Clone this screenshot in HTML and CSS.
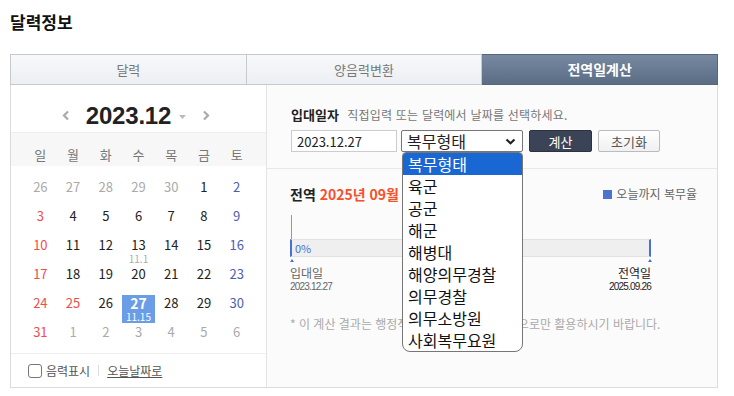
FILE: index.html
```html
<!DOCTYPE html>
<html lang="ko">
<head>
    <meta charset="UTF-8">
    <meta name="viewport" content="width=device-width, initial-scale=1.0">
    <title>달력정보</title>
    <link rel="stylesheet" href="styles.css">
</head>
<body>

<div class="container">
    <h2 class="page-title">달력정보</h2>

    <div class="tabs">
        <div class="tab">달력</div>
        <div class="tab">양음력변환</div>
        <div class="tab active">전역일계산</div>
    </div>

    <div class="panel">
        <!-- calendar -->
        <div class="cal">
            <div class="cal-head">
                <svg class="arrow" width="8" height="11" viewBox="0 0 8 11"><polyline points="6,1.5 2,5.5 6,9.5" fill="none" stroke="#aaa" stroke-width="2.2"/></svg>
                <span class="month">2023.12</span>
                <svg class="caret" width="7" height="4" viewBox="0 0 7 4"><polygon points="0,0 7,0 3.5,4" fill="#bbb"/></svg>
                <svg class="arrow" width="8" height="11" viewBox="0 0 8 11"><polyline points="2,1.5 6,5.5 2,9.5" fill="none" stroke="#aaa" stroke-width="2.2"/></svg>
            </div>
            <div class="week">
                <span>일</span><span>월</span><span>화</span><span>수</span><span>목</span><span>금</span><span>토</span>
            </div>
            <div class="days">
                <div class="day other">26</div>
                <div class="day other">27</div>
                <div class="day other">28</div>
                <div class="day other">29</div>
                <div class="day other">30</div>
                <div class="day">1</div>
                <div class="day sat">2</div>

                <div class="day sun">3</div>
                <div class="day">4</div>
                <div class="day">5</div>
                <div class="day">6</div>
                <div class="day">7</div>
                <div class="day">8</div>
                <div class="day sat">9</div>

                <div class="day sun">10</div>
                <div class="day">11</div>
                <div class="day">12</div>
                <div class="day">13<small>11.1</small></div>
                <div class="day">14</div>
                <div class="day">15</div>
                <div class="day sat">16</div>

                <div class="day sun">17</div>
                <div class="day">18</div>
                <div class="day">19</div>
                <div class="day">20</div>
                <div class="day">21</div>
                <div class="day">22</div>
                <div class="day sat">23</div>

                <div class="day sun">24</div>
                <div class="day sun">25</div>
                <div class="day">26</div>
                <div class="day selected">27<small>11.15</small></div>
                <div class="day">28</div>
                <div class="day">29</div>
                <div class="day sat">30</div>

                <div class="day sun">31</div>
                <div class="day other">1</div>
                <div class="day other">2</div>
                <div class="day other">3</div>
                <div class="day other">4</div>
                <div class="day other">5</div>
                <div class="day other">6</div>
            </div>
            <div class="cal-foot">
                <span class="check"></span>
                <span>음력표시</span>
                <span class="bar-sep"></span>
                <a href="#" class="today">오늘날짜로</a>
            </div>
        </div>

        <!-- discharge calculator -->
        <div class="calc">
            <div class="calc-form">
                <div class="label-row">
                    <strong>입대일자</strong>
                    <span class="hint">직접입력 또는 달력에서 날짜를 선택하세요.</span>
                </div>
                <div class="controls">
                    <input type="text" class="date-input" value="2023.12.27">
                    <div class="sel">
                        <span class="sel-text">복무형태</span>
                        <svg class="chev" width="11" height="7" viewBox="0 0 11 7"><polyline points="1.5,1.5 5.5,5.2 9.5,1.5" fill="none" stroke="#222" stroke-width="2.2"/></svg>
                        <ul class="options">
                            <li class="on">복무형태</li>
                            <li>육군</li>
                            <li>공군</li>
                            <li>해군</li>
                            <li>해병대</li>
                            <li>해양의무경찰</li>
                            <li>의무경찰</li>
                            <li>의무소방원</li>
                            <li>사회복무요원</li>
                        </ul>
                    </div>
                    <button class="btn-calc">계산</button>
                    <button class="btn-reset">초기화</button>
                </div>
            </div>

            <div class="result">
                <div class="result-head">
                    <div class="result-title">전역 <span class="red">2025년 09월 26일</span></div>
                    <div class="legend"><span class="legend-box"></span>오늘까지 복무율</div>
                </div>
                <div class="tick"></div>
                <div class="progress"><span class="pct">0%</span></div>
                <div class="markers"><span></span><span></span></div>
                <div class="ends">
                    <div>
                        <div class="end-label">입대일</div>
                        <div class="end-date">2023.12.27</div>
                    </div>
                    <div class="end-right">
                        <div class="end-label">전역일</div>
                        <div class="end-date">2025.09.26</div>
                    </div>
                </div>
                <p class="note">* 이 계산 결과는 행정적 효력이 없으며 참고용으로만 활용하시기 바랍니다.</p>
            </div>
        </div>
    </div>
</div>

</body>
</html>
```

FILE: styles.css
```css
* {
    box-sizing: border-box;
}
body {
    margin: 0;
    font-family: "Noto Sans CJK KR", "Noto Sans", sans-serif;
    color: #222;
    background-color: #fff;
}
.container {
    width: 708px;
    margin-left: 10px;
    padding-top: 10px;
}
.page-title {
    margin: 0 0 20px;
    font-size: 17px;
    line-height: 24px;
    font-weight: bold;
    color: #111;
}

/* tabs */
.tabs {
    display: flex;
    height: 31px;
}
.tab {
    flex: 1;
    border: 1px solid #c6cad0;
    border-left: none;
    background: linear-gradient(#f7f8fa, #eceff3);
    color: #777;
    font-size: 13px;
    line-height: 29px;
    text-align: center;
}
.tab:first-child {
    border-left: 1px solid #c6cad0;
}
.tab.active {
    background: linear-gradient(#7789a1, #5b6c85);
    border-color: #56667d;
    color: #fff;
    font-weight: bold;
    font-size: 14px;
}

.panel {
    display: flex;
    height: 303px;
    border: 1px solid #dcdcdc;
    border-top: none;
}

/* calendar */
.cal {
    width: 256px;
    border-right: 1px solid #e4e4e4;
    background-color: #fff;
}
.cal-head {
    height: 48px;
    border-bottom: 1px solid #eee;
    display: flex;
    align-items: center;
    justify-content: center;
    padding: 14px 5px 0 0;
}
.month {
    font-family: "Liberation Sans", Arial, sans-serif;
    font-size: 24px;
    font-weight: bold;
    color: #222;
    margin: 0 8px 0 16px;
    letter-spacing: -0.2px;
}
.caret {
    margin: 3px 16px 0 0;
}
.week {
    display: grid;
    grid-template-columns: repeat(7, 1fr);
    height: 33px;
    padding: 13px 13px 0;
    background-color: #f7f7f7;
    font-size: 13px;
    line-height: 17px;
    color: #777;
    text-align: center;
}
.days {
    display: grid;
    grid-template-columns: repeat(7, 1fr);
    grid-auto-rows: 29px;
    height: 187px;
    padding: 13px 13px 0;
}
.day {
    height: 28px;
    text-align: center;
    font-size: 13px;
    line-height: 16px;
    color: #222;
}
.day small {
    display: block;
    font-size: 10px;
    line-height: 11px;
    color: #aaa;
}
.day.sun {
    color: #f24d4d;
}
.day.sat {
    color: #4f5db0;
}
.day.other {
    color: #aaa;
}
.day.selected {
    background-color: #6b9de6;
    color: #fff;
    font-weight: bold;
    font-size: 14px;
}
.day.selected small {
    color: #fff;
    font-weight: normal;
}
.cal-foot {
    height: 34px;
    border-top: 1px solid #eee;
    display: flex;
    align-items: center;
    padding-left: 17px;
    font-size: 12px;
    color: #555;
}
.check {
    width: 14px;
    height: 14px;
    border: 1px solid #777;
    border-radius: 3px;
    margin-right: 4px;
}
.bar-sep {
    width: 1px;
    height: 11px;
    background-color: #ddd;
    margin: 0 8px;
}
.today {
    color: #555;
    text-decoration: underline;
}

/* calculator */
.calc {
    flex: 1;
    background-color: #fbfbfb;
}
.calc-form {
    padding: 18px 20px 16px 24px;
    border-bottom: 1px solid #e8e8e8;
}
.label-row {
    line-height: 20px;
}
.label-row strong {
    font-size: 13px;
    color: #222;
}
.hint {
    margin-left: 4px;
    font-size: 12px;
    letter-spacing: 0.2px;
    color: #777;
}
.controls {
    display: flex;
    margin-top: 5px;
    height: 22px;
}
.date-input {
    width: 106px;
    height: 22px;
    margin: 0 4px 0 0;
    padding: 0 5px;
    border: 1px solid #ccc;
    background-color: #fff;
    font-family: "Noto Sans CJK KR", sans-serif;
    font-size: 13px;
    color: #222;
}
.sel {
    position: relative;
    width: 122px;
    height: 22px;
    border: 1px solid #767676;
    border-radius: 2px;
    background-color: #fff;
    margin-right: 6px;
}
.sel-text {
    display: block;
    padding-left: 5px;
    font-size: 16px;
    line-height: 20px;
}
.chev {
    position: absolute;
    right: 6px;
    top: 7px;
}
.options {
    position: absolute;
    top: 21px;
    left: 0;
    width: 121px;
    margin: 0;
    padding: 0;
    list-style: none;
    background-color: #fff;
    border: 1px solid #767676;
    border-radius: 4px 4px 8px 8px;
    overflow: hidden;
    z-index: 5;
}
.options li {
    height: 22px;
    line-height: 22px;
    padding-left: 5px;
    font-size: 16px;
    color: #111;
}
.options li.on {
    background-color: #1967d2;
    color: #fff;
}
.btn-calc, .btn-reset {
    height: 22px;
    border-radius: 2px;
    font-family: "Noto Sans CJK KR", sans-serif;
    font-size: 13px;
    padding: 0;
    cursor: pointer;
}
.btn-calc {
    width: 63px;
    margin-right: 6px;
    background-color: #3b4357;
    border: 1px solid #2c3243;
    color: #fff;
}
.btn-reset {
    width: 62px;
    background: linear-gradient(#fff, #f0f0f0);
    border: 1px solid #bbb;
    color: #555;
}

.result {
    padding: 15px 20px 0 23px;
}
.result-head {
    display: flex;
    justify-content: space-between;
    align-items: center;
    line-height: 20px;
}
.result-title {
    font-size: 14px;
    font-weight: bold;
    color: #222;
}
.red {
    color: #f5502a;
}
.legend {
    display: flex;
    align-items: center;
    font-size: 12px;
    color: #666;
}
.legend-box {
    width: 9px;
    height: 9px;
    background-color: #4d73d1;
    margin-right: 4px;
}
.tick {
    width: 1px;
    height: 24px;
    margin: 11px 0 0 1px;
    background-color: #999;
}
.progress {
    width: 361px;
    height: 18px;
    background-color: #efefef;
    border: 1px solid #e2e2e2;
    border-left: 2px solid #4d6fcf;
    border-right: 2px solid #4d6fcf;
    font-size: 11px;
    line-height: 16px;
    color: #4d6fcf;
    padding-left: 3px;
}
.markers {
    display: flex;
    justify-content: space-between;
    width: 362px;
    height: 8px;
    padding-top: 2px;
}
.markers span {
    width: 0;
    height: 0;
    border-left: 2px solid transparent;
    border-right: 2px solid transparent;
    border-bottom: 3px solid #4d6fcf;
}
.ends {
    display: flex;
    justify-content: space-between;
    width: 361px;
}
.end-right {
    text-align: right;
    color: #222;
}
.end-label {
    font-size: 12px;
    line-height: 16px;
    color: #666;
}
.end-right .end-label {
    color: #222;
}
.end-date {
    font-family: "Liberation Sans", Arial, sans-serif;
    font-size: 10px;
    line-height: 12px;
    letter-spacing: -0.8px;
    color: #666;
}
.end-right .end-date {
    color: #222;
}
.note {
    margin: 23px 0 0;
    font-size: 12px;
    line-height: 16px;
    color: #aaa;
}
```
